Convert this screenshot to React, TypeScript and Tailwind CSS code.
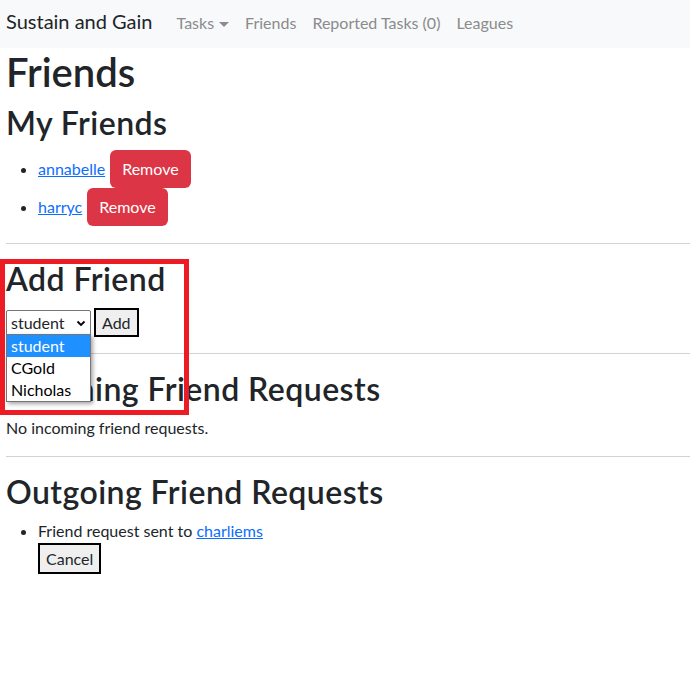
import React from 'react';

const font = { fontFamily: 'Lato, "Noto Sans", sans-serif' };

function NavBar() {
  const links = ['Friends', 'Reported Tasks (0)', 'Leagues'];
  return (
    <nav className="flex h-12 items-baseline bg-[#f8f9fa] px-[6px] pt-[6px]">
      <span className="mr-4 text-[20px] leading-[30px] text-[#212529]">Sustain and Gain</span>
      <ul className="flex items-baseline">
        <li className="flex items-center px-2 text-[16px] leading-6 text-[#8a8b8c]">
          Tasks
          <span className="ml-[5px] mt-[2px] h-0 w-0 border-x-[5px] border-t-[5px] border-x-transparent border-t-[#8a8b8c]"></span>
        </li>
        {links.map(link => (
          <li key={link} className="px-2 text-[16px] leading-6 text-[#8a8b8c]">
            {link}
          </li>
        ))}
      </ul>
    </nav>
  );
}

export default function App() {
  const friends = ['annabelle', 'harryc'];
  const options = ['student', 'CGold', 'Nicholas'];

  return (
    <div className="relative min-h-[687px] bg-white text-[16px] leading-6 text-[#212529]" style={font}>
      <NavBar />

      <div className="pl-[6px]">
        <h1 className="mb-2 text-[40px] font-semibold leading-[48px]">Friends</h1>
        <h2 className="mb-2 text-[32px] font-semibold leading-[38px] tracking-[0.014em]">My Friends</h2>
        <ul className="mb-[17px] list-disc pl-8">
          {friends.map(name => (
            <li key={name}>
              <a href="#" className="text-[#0d6efd] underline">{name}</a>
              <button className="ml-[5px] rounded-md bg-[#dc3545] px-3 py-[7px] leading-6 text-white">Remove</button>
            </li>
          ))}
        </ul>

        <hr className="border-[#d3d3d3]" />

        {/* Add Friend */}
        <h2 className="mb-2 mt-4 text-[32px] font-semibold leading-[38px] tracking-[0.014em]">Add Friend</h2>
        <div className="flex items-center gap-[3px] pb-4 pt-[2px]">
          <div className="flex h-[26px] w-[85px] items-center justify-between rounded-[2px] border border-[#767676] pl-[4px] pr-[4px]">
            <span>student</span>
            <svg width="10" height="10" viewBox="0 0 10 10" fill="none" stroke="#000" strokeWidth="1.8">
              <path d="M1.5 3.5 L5 7 L8.5 3.5" />
            </svg>
          </div>
          <button className="h-[29px] border-2 border-black bg-[#efefef] px-[6px] leading-5">Add</button>
        </div>

        <hr className="border-[#d3d3d3]" />

        {/* Incoming */}
        <h2 className="mb-2 mt-4 text-[32px] font-semibold leading-[38px] tracking-[0.014em]">Incoming Friend Requests</h2>
        <p className="mb-4">No incoming friend requests.</p>

        <hr className="border-[#d3d3d3]" />

        {/* Outgoing */}
        <h2 className="mb-2 mt-4 text-[32px] font-semibold leading-[38px] tracking-[0.014em]">Outgoing Friend Requests</h2>
        <ul className="list-disc pl-8">
          <li>
            Friend request sent to <a href="#" className="text-[#0d6efd] underline">charliems</a>
            <div>
              <button className="h-[31px] border-2 border-black bg-[#efefef] px-[6px] leading-5">Cancel</button>
            </div>
          </li>
        </ul>
      </div>

      {/* open select list */}
      <ul className="absolute left-[6px] top-[334px] w-[85px] border border-[#767676] bg-white shadow-[2px_2px_4px_rgba(0,0,0,0.35)]">
        {options.map((opt, i) => (
          <li
            key={opt}
            className={i === 0 ? 'h-[22px] bg-[#1e90ff] pl-[4px] leading-[22px] text-white' : 'h-[22px] pl-[4px] leading-[22px] text-black'}
          >
            {opt}
          </li>
        ))}
      </ul>

      {/* annotation box */}
      <div className="pointer-events-none absolute left-0 top-[259px] h-[156px] w-[189px] border-[5px] border-[#ed1c24]"></div>
    </div>
  );
}
